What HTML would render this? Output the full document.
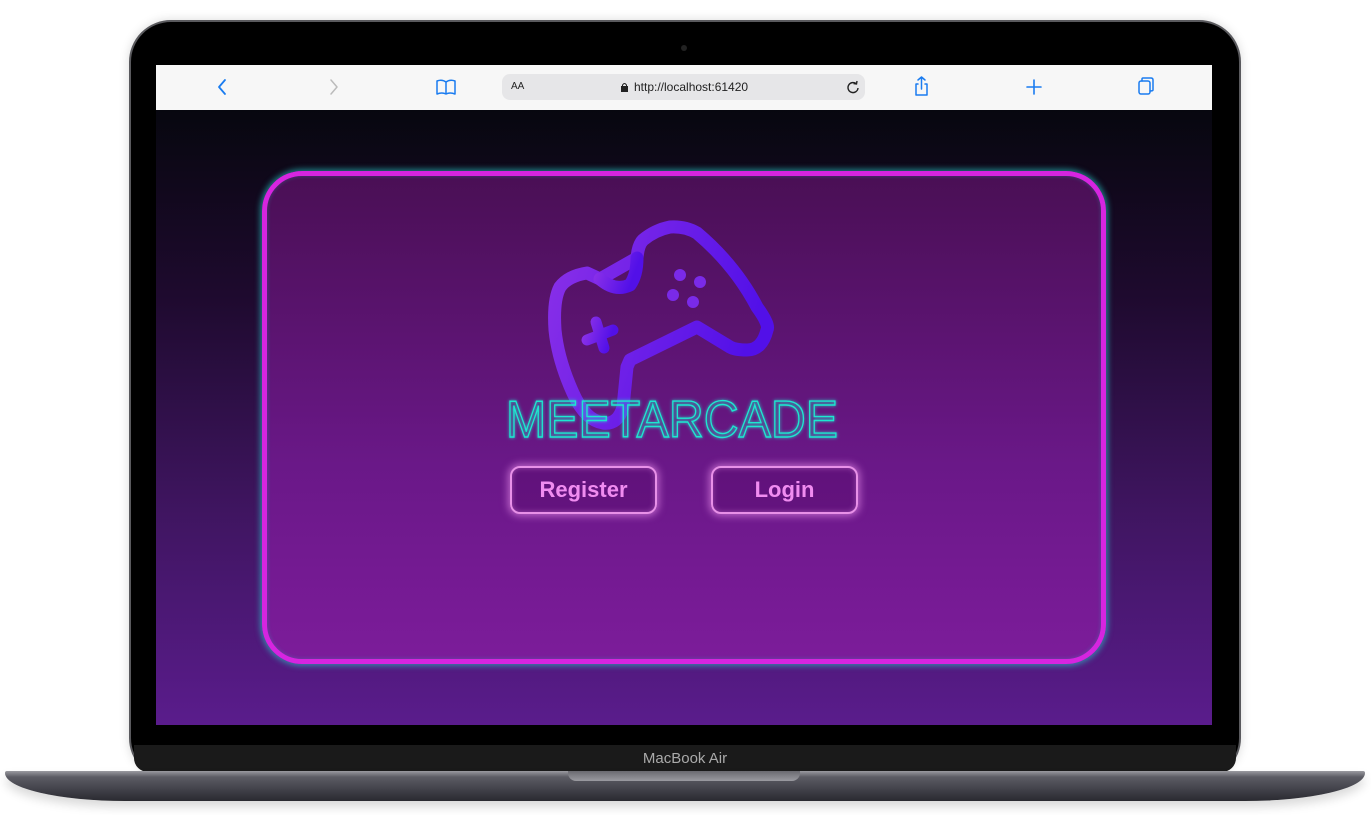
<!DOCTYPE html>
<html><head><meta charset="utf-8"><style>
*{margin:0;padding:0;box-sizing:border-box}
body{width:1371px;height:815px;background:#fff;position:relative;overflow:hidden;font-family:"Liberation Sans",sans-serif}
.bezel{position:absolute;left:129px;top:20px;width:1112px;height:760px;background:#000;border-radius:42px;border:2px solid #5a5a5e;box-shadow:0 0 10px rgba(0,0,0,.15)}
.cam{position:absolute;left:681px;top:45px;width:6px;height:6px;border-radius:50%;background:#222}
.bar{position:absolute;left:156px;top:65px;width:1056px;height:45px;background:#f7f7f7}
.url{position:absolute;left:502px;top:74px;width:363px;height:26px;background:#e6e6e8;border-radius:8px;font-size:12px;color:#222}
.screen{position:absolute;left:156px;top:110px;width:1056px;height:615px;background:linear-gradient(#07070f 0%,#1e0a2e 30%,#3f1560 65%,#5a1c8c 100%)}
.chin{position:absolute;left:134px;top:745px;width:1102px;height:27px;background:#1a1a1a;color:#aaa;font-size:15px;text-align:center;line-height:27px;border-radius:0 0 14px 14px}
.base{position:absolute;left:5px;top:771px;width:1360px;height:30px;background:linear-gradient(#9a9aa0 0%,#5c5c64 20%,#3c3c44 70%,#2a2a30 100%);border-radius:2px 2px 120px 120px/2px 2px 28px 28px;box-shadow:0 6px 10px rgba(0,0,0,.15)}
.notch{position:absolute;left:568px;top:771px;width:232px;height:10px;background:linear-gradient(#6a6a70,#9a9aa0);border-radius:0 0 8px 8px}
.card{position:absolute;left:262px;top:171px;width:844px;height:493px;border:5px solid #d625e0;border-radius:40px;background:linear-gradient(#4a0f55,#6a1888 60%,#7c1c9a);box-shadow:0 0 6px 2px rgba(40,200,200,.6),inset 0 0 4px rgba(40,200,200,.3)}
.btn{position:absolute;top:466px;width:147px;height:48px;border:2px solid #e890e8;border-radius:10px;background:rgba(80,10,100,.35);color:#f08cf0;font-weight:bold;font-size:22px;text-align:center;line-height:44px;box-shadow:0 0 8px 2px rgba(240,150,240,.6),inset 0 0 6px rgba(240,150,240,.4)}
</style></head><body>
<div class="bezel"></div>
<div class="cam"></div>
<div class="bar">
<svg width="1056" height="45" style="position:absolute;left:0;top:0" fill="none" stroke-linecap="round" stroke-linejoin="round">
<path d="M69 15 L63 22 L69 29" stroke="#1a7cf0" stroke-width="1.8"/>
<path d="M175 15 L181 22 L175 29" stroke="#bbb" stroke-width="1.5"/>
<path d="M281 16 Q286 14 290 17 Q294 14 299 16 V29 Q294 27 290 29 Q286 27 281 29 Z M290 17 V29" stroke="#1a7cf0" stroke-width="1.5"/>
<path d="M762 19 H760 V30 H771 V19 H769 M765.5 12 V24 M762 15 L765.5 12 L769 15" stroke="#1a7cf0" stroke-width="1.5"/>
<path d="M878 15 V29 M871 22 H885" stroke="#1a7cf0" stroke-width="1.6"/>
<rect x="983" y="16" width="11" height="13" rx="2" stroke="#1a7cf0" stroke-width="1.5"/>
<path d="M986 16 V14 Q986 13 987 13 H995 Q997 13 997 15 V25 Q997 26 994 26" stroke="#1a7cf0" stroke-width="1.5"/>
</svg>
</div>
<div class="url"><span style="position:absolute;left:9px;top:7px;font-size:10px">AA</span>
<svg style="position:absolute;left:118px;top:8px" width="9" height="11"><rect x="1" y="4" width="7" height="6" fill="#222"/><path d="M2.5 4 V3 Q4.5 0 6.5 3 V4" stroke="#222" fill="none"/></svg>
<span style="position:absolute;left:132px;top:6px">http://localhost:61420</span>
<svg style="position:absolute;left:343px;top:5px" width="16" height="16" fill="none" stroke="#222" stroke-width="1.4"><path d="M11.5 5 A5 5 0 1 0 13 9"/><path d="M8.5 4.5 L11.5 5 L12 2"/></svg>
</div>
<div class="screen"></div>
<div class="card"></div>
<svg width="1371" height="815" style="position:absolute;left:0;top:0">
<defs><linearGradient id="g" x1="0" y1="0" x2="1" y2="0.3"><stop offset="0" stop-color="#8a30e8"/><stop offset="1" stop-color="#5210e8"/></linearGradient>
<filter id="gl"><feGaussianBlur stdDeviation="1.5" result="b"/><feMerge><feMergeNode in="b"/><feMergeNode in="SourceGraphic"/></feMerge></filter></defs>
<g stroke="url(#g)" stroke-width="13" fill="none" stroke-linecap="round" stroke-linejoin="round">
<path d="M560 287 Q568 276 587 273 L600 279 L637 258 Q638 245 643 240 Q655 230 670 227 Q685 226 697 233 Q735 265 757 307 Q770 325 767 330 Q762 350 747 350 Q735 350 730 347 L697 327 L630 360 L627 367 L623 407 Q618 425 603 423 Q585 420 573 393 Q558 360 555 330 Q553 300 560 287 Z"/>
<path d="M600 279 Q615 292 630 285 Q637 275 637 258"/>
<path d="M587 340 L613 330 M596 322 L604 348" stroke-width="11"/>
</g>
<g fill="#7a2ae8"><circle cx="680" cy="275" r="6"/><circle cx="700" cy="282" r="6"/><circle cx="673" cy="295" r="6"/><circle cx="693" cy="302" r="6"/></g>
<text x="506" y="437" font-family="Liberation Sans" font-size="52" textLength="332" lengthAdjust="spacingAndGlyphs" fill="none" stroke="#1de8d0" stroke-width="1.4" filter="url(#gl)">MEETARCADE</text>
</svg>
<div class="btn" style="left:510px">Register</div>
<div class="btn" style="left:711px">Login</div>
<div class="chin">MacBook Air</div>
<div class="base"></div>
<div class="notch"></div>
</body></html>
